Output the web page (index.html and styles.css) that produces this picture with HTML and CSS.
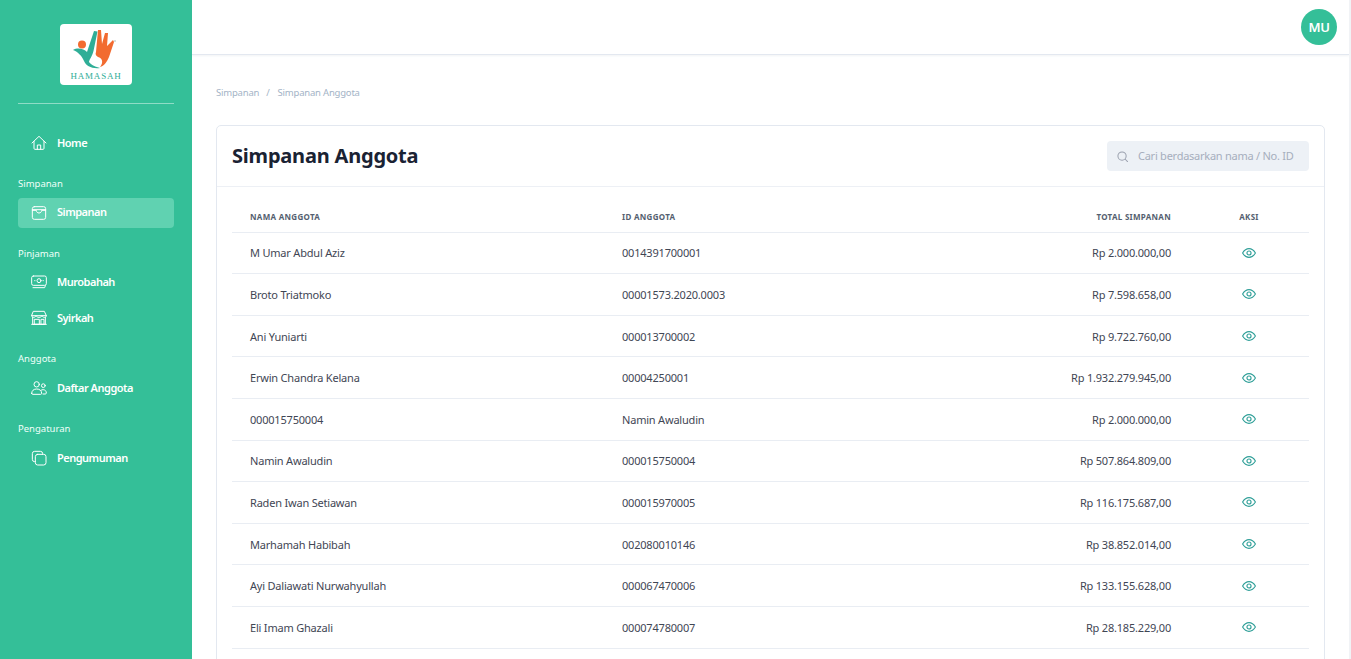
FILE: index.html
```html
<!DOCTYPE html>
<html lang="id">
<head>
<meta charset="utf-8">
<title>Simpanan Anggota</title>
<link rel="stylesheet" href="styles.css">
</head>
<body>
<div class="app">
  <aside class="sidebar">
    <div class="logo-wrap">
      <div class="logo">
        <svg class="logo-mark" viewBox="0 0 72 47" width="72" height="47">
          <circle cx="22" cy="20.500" r="4" fill="#f26b30"/>
          <path d="M13 26C18 23 24 25 27 28L34 7L37.500 7.500L33.500 27C32 33 29.500 35 29 38C31 41 36 43 40 44C32 45 26 42 24 37C22 32 18 28 13 26Z" fill="#2fae97"/>
          <path d="M38 6L41 6L42 20L45 9L48 9L47 22L53 16L54 18L49 33C47 38 44 42 40 43C44 38 42 34 38 33C36 32 35 30 36 28Z" fill="#f26b30"/>
          <circle cx="55" cy="17" r="1" fill="#c9d6d2"/>
        </svg>
        <span class="logo-text">HAMASAH</span>
      </div>
    </div>
    <nav class="nav">
      <a class="nav-item">
        <svg class="nav-icon" viewBox="0 0 24 24"><path d="M1.500 12L12 2l10.500 10M4.500 9.500V20a1.500 1.500 0 0 0 1.500 1.500h12a1.500 1.500 0 0 0 1.500-1.500V9.500M9.500 21.500V15h5v6.500"/></svg>
        <span class="nav-label">Home</span>
      </a>
      <div class="nav-group">Simpanan</div>
      <a class="nav-item nav-active">
        <svg class="nav-icon" viewBox="0 0 24 24"><rect x="2" y="2.500" width="20" height="19" rx="3"/><path d="M2 7h20M2 8h6c0 2.200 1.600 4 4 4s4-1.800 4-4h6"/></svg>
        <span class="nav-label">Simpanan</span>
      </a>
      <div class="nav-group nav-group-b">Pinjaman</div>
      <a class="nav-item">
        <svg class="nav-icon" viewBox="0 0 24 24"><rect x="1" y="3" width="22" height="14" rx="2.500"/><circle cx="12" cy="10" r="3"/><path d="M5.500 10h.5M18 10h.5M3 20.500h17.500l1-3"/></svg>
        <span class="nav-label">Murobahah</span>
      </a>
      <a class="nav-item">
        <svg class="nav-icon" viewBox="0 0 24 24"><path d="M4 2h16l3 6.500c0 1.500-1.500 2.500-3 2.500s-3-1-3.500-2.500C16 10 14 11 12 11s-4-1-4.500-2.500C7 10 5.500 11 4 11S1 10 1 8.500zM1 8.500h22M2.500 11v10.500h19V11M1 21.500h22"/><path d="M5.500 14h7v7.500h-7zM15.500 14h4v7.500h-4z"/></svg>
        <span class="nav-label">Syirkah</span>
      </a>
      <div class="nav-group nav-group-c">Anggota</div>
      <a class="nav-item">
        <svg class="nav-icon" viewBox="0 0 24 24"><circle cx="8.500" cy="6.500" r="4"/><circle cx="18.500" cy="8.500" r="2.800"/><path d="M1 20c0-4 3-6.500 7.500-6.500S16 16 16 20c0 .8-.6 1.500-1.500 1.500h-12C1.600 21.500 1 20.800 1 20zM18 21h3.500c.8 0 1.500-.6 1.500-1.500 0-3-2-5-4.800-5-1.200 0-2.200.3-3 .8"/></svg>
        <span class="nav-label">Daftar Anggota</span>
      </a>
      <div class="nav-group nav-group-c">Pengaturan</div>
      <a class="nav-item">
        <svg class="nav-icon" viewBox="0 0 24 24"><rect x="6.500" y="6.500" width="16" height="16" rx="3.500"/><path d="M6.500 17.500h-1A3.500 3.500 0 0 1 2 14V5.500A3.500 3.500 0 0 1 5.500 2H14a3.500 3.500 0 0 1 3.500 3.500v1"/></svg>
        <span class="nav-label">Pengumuman</span>
      </a>
    </nav>
  </aside>
  <div class="main">
    <header class="topbar">
      <div class="avatar">MU</div>
    </header>
    <main class="content">
      <div class="breadcrumb"><span>Simpanan</span><span class="sep">/</span><span>Simpanan Anggota</span></div>
      <section class="card">
        <div class="card-head">
          <h1>Simpanan Anggota</h1>
          <div class="search">
            <svg class="search-icon" viewBox="0 0 24 24"><circle cx="11" cy="11" r="9"/><path d="M18 18l5 5"/></svg>
            <span class="search-text">Cari berdasarkan nama / No. ID</span>
          </div>
        </div>
        <div class="card-body">
          <table class="table">
            <thead>
              <tr><th class="c1">Nama Anggota</th><th>ID Anggota</th><th class="num">Total Simpanan</th><th class="act">Aksi</th></tr>
            </thead>
            <tbody>
              <tr><td>M Umar Abdul Aziz</td><td>0014391700001</td><td class="num">Rp 2.000.000,00</td><td class="act"><svg class="eye" viewBox="0 0 24 24"><path d="M1 12C4 7 8 4.500 12 4.500S20 7 23 12c-3 5-7 7.500-11 7.500S4 17 1 12z"/><circle cx="12" cy="12" r="3.500"/></svg></td></tr>
              <tr><td>Broto Triatmoko</td><td>00001573.2020.0003</td><td class="num">Rp 7.598.658,00</td><td class="act"><svg class="eye" viewBox="0 0 24 24"><path d="M1 12C4 7 8 4.500 12 4.500S20 7 23 12c-3 5-7 7.500-11 7.500S4 17 1 12z"/><circle cx="12" cy="12" r="3.500"/></svg></td></tr>
              <tr><td>Ani Yuniarti</td><td>000013700002</td><td class="num">Rp 9.722.760,00</td><td class="act"><svg class="eye" viewBox="0 0 24 24"><path d="M1 12C4 7 8 4.500 12 4.500S20 7 23 12c-3 5-7 7.500-11 7.500S4 17 1 12z"/><circle cx="12" cy="12" r="3.500"/></svg></td></tr>
              <tr><td>Erwin Chandra Kelana</td><td>00004250001</td><td class="num">Rp 1.932.279.945,00</td><td class="act"><svg class="eye" viewBox="0 0 24 24"><path d="M1 12C4 7 8 4.500 12 4.500S20 7 23 12c-3 5-7 7.500-11 7.500S4 17 1 12z"/><circle cx="12" cy="12" r="3.500"/></svg></td></tr>
              <tr><td>000015750004</td><td>Namin Awaludin</td><td class="num">Rp 2.000.000,00</td><td class="act"><svg class="eye" viewBox="0 0 24 24"><path d="M1 12C4 7 8 4.500 12 4.500S20 7 23 12c-3 5-7 7.500-11 7.500S4 17 1 12z"/><circle cx="12" cy="12" r="3.500"/></svg></td></tr>
              <tr><td>Namin Awaludin</td><td>000015750004</td><td class="num">Rp 507.864.809,00</td><td class="act"><svg class="eye" viewBox="0 0 24 24"><path d="M1 12C4 7 8 4.500 12 4.500S20 7 23 12c-3 5-7 7.500-11 7.500S4 17 1 12z"/><circle cx="12" cy="12" r="3.500"/></svg></td></tr>
              <tr><td>Raden Iwan Setiawan</td><td>000015970005</td><td class="num">Rp 116.175.687,00</td><td class="act"><svg class="eye" viewBox="0 0 24 24"><path d="M1 12C4 7 8 4.500 12 4.500S20 7 23 12c-3 5-7 7.500-11 7.500S4 17 1 12z"/><circle cx="12" cy="12" r="3.500"/></svg></td></tr>
              <tr><td>Marhamah Habibah</td><td>002080010146</td><td class="num">Rp 38.852.014,00</td><td class="act"><svg class="eye" viewBox="0 0 24 24"><path d="M1 12C4 7 8 4.500 12 4.500S20 7 23 12c-3 5-7 7.500-11 7.500S4 17 1 12z"/><circle cx="12" cy="12" r="3.500"/></svg></td></tr>
              <tr><td>Ayi Daliawati Nurwahyullah</td><td>000067470006</td><td class="num">Rp 133.155.628,00</td><td class="act"><svg class="eye" viewBox="0 0 24 24"><path d="M1 12C4 7 8 4.500 12 4.500S20 7 23 12c-3 5-7 7.500-11 7.500S4 17 1 12z"/><circle cx="12" cy="12" r="3.500"/></svg></td></tr>
              <tr><td>Eli Imam Ghazali</td><td>000074780007</td><td class="num">Rp 28.185.229,00</td><td class="act"><svg class="eye" viewBox="0 0 24 24"><path d="M1 12C4 7 8 4.500 12 4.500S20 7 23 12c-3 5-7 7.500-11 7.500S4 17 1 12z"/><circle cx="12" cy="12" r="3.500"/></svg></td></tr>
            </tbody>
          </table>
        </div>
      </section>
    </main>
  </div>
</div>
</body>
</html>
```
FILE: styles.css
```css
* { box-sizing: border-box; }
html, body { margin: 0; height: 100%; overflow: hidden; }
body { font-family: "Noto Sans", "Open Sans", sans-serif; font-size: 11px; color: #374151; background: #fff; border-right: 2px solid #f1f3f6; }
.app { display: flex; height: 659px; }
.sidebar { width: 192px; flex: none; background: #34bf98; color: #fff; padding: 24px 18px 0; }
.logo-wrap { display: flex; justify-content: center; padding-bottom: 18px; border-bottom: 1px solid #8fdcc6; height: 80px; }
.logo { width: 72px; height: 61px; background: #fff; border-radius: 4px; display: flex; flex-direction: column; align-items: center; }
.logo-mark { display: block; width: 72px; height: 47px; flex: none; }
.logo-text { font-family: "Liberation Serif", serif; font-size: 9px; line-height: 8px; letter-spacing: 0.800px; color: #2fae97; margin-top: 1px; }
.nav { display: flex; flex-direction: column; padding-top: 21px; }
.nav-item { display: flex; align-items: center; height: 36px; padding-left: 13px; gap: 10px; font-weight: 600; font-size: 11px; letter-spacing: -0.500px; color: #fff; border-radius: 4px; }
.nav-label { padding-bottom: 2px; }
.nav-icon { width: 16px; height: 16px; flex: none; fill: none; stroke: #fff; stroke-width: 1.500; stroke-linecap: round; stroke-linejoin: round; }
.nav-active { height: 30px; background: #60d2b1; }
.nav-active .nav-label { padding-bottom: 3px; }
.nav-group { font-size: 9.500px; line-height: 14px; margin-top: 16px; margin-bottom: 7px; color: #f0fffa; }
.nav-group-b { margin-top: 19px; margin-bottom: 3px; }
.nav-group-c { margin-top: 16px; margin-bottom: 4px; }
.main { flex: 1; min-width: 0; display: flex; flex-direction: column; }
.topbar { height: 55px; flex: none; border-bottom: 1px solid #e3e8f0; box-shadow: 0 1px 2px rgba(120, 135, 160, 0.100); display: flex; justify-content: flex-end; align-items: flex-start; padding: 9px 12px 0 0; }
.avatar { width: 36px; height: 36px; border-radius: 50%; background: #34bf98; color: #fff; font-weight: 600; font-size: 13px; letter-spacing: -0.300px; display: flex; align-items: center; justify-content: center; }
.content { padding: 31px 24px 0; }
.breadcrumb { display: flex; gap: 6px; font-size: 9.500px; letter-spacing: -0.200px; line-height: 14px; color: #a3b3c6; }
.sep { margin: 0 2px 0 1px; }
.card { margin-top: 25px; border: 1px solid #e3e8f0; border-radius: 5px; }
.card-head { height: 61px; border-bottom: 1px solid #edf0f5; display: flex; align-items: center; justify-content: space-between; padding: 0 15px; }
.card-head h1 { margin: 0 0 2px; font-size: 20px; font-weight: 700; letter-spacing: -0.200px; color: #1a2233; }
.search { width: 202px; height: 30px; background: #edf1f6; border-radius: 4px; display: flex; align-items: center; padding-left: 10px; gap: 10px; color: #a6aebd; font-size: 11px; letter-spacing: -0.250px; white-space: nowrap; }
.search-text { padding-bottom: 2px; }
.search-icon { width: 11px; height: 11px; flex: none; fill: none; stroke: #9aa0ae; stroke-width: 2.200; stroke-linecap: round; }
.card-body { padding: 15px 15px 24px; }
.table { width: 100%; border-collapse: collapse; table-layout: fixed; }
.table th { height: 30px; font-size: 8px; letter-spacing: 0.300px; font-weight: 700; text-transform: uppercase; color: #555f70; text-align: left; padding: 0 18px; border-bottom: 1px solid #e9edf3; }
.table td { height: 41.620px; padding: 0 18px; font-size: 11px; letter-spacing: -0.200px; color: #3f4654; border-bottom: 1px solid #e9edf3; white-space: nowrap; }
.table .c1 { width: 372px; }
.table .num { text-align: right; width: 300px; }
.table .act { text-align: center; width: 120px; }
.eye { width: 14px; height: 14px; display: block; margin: 0 auto; fill: none; stroke: #2f9f98; stroke-width: 1.900; }
```
